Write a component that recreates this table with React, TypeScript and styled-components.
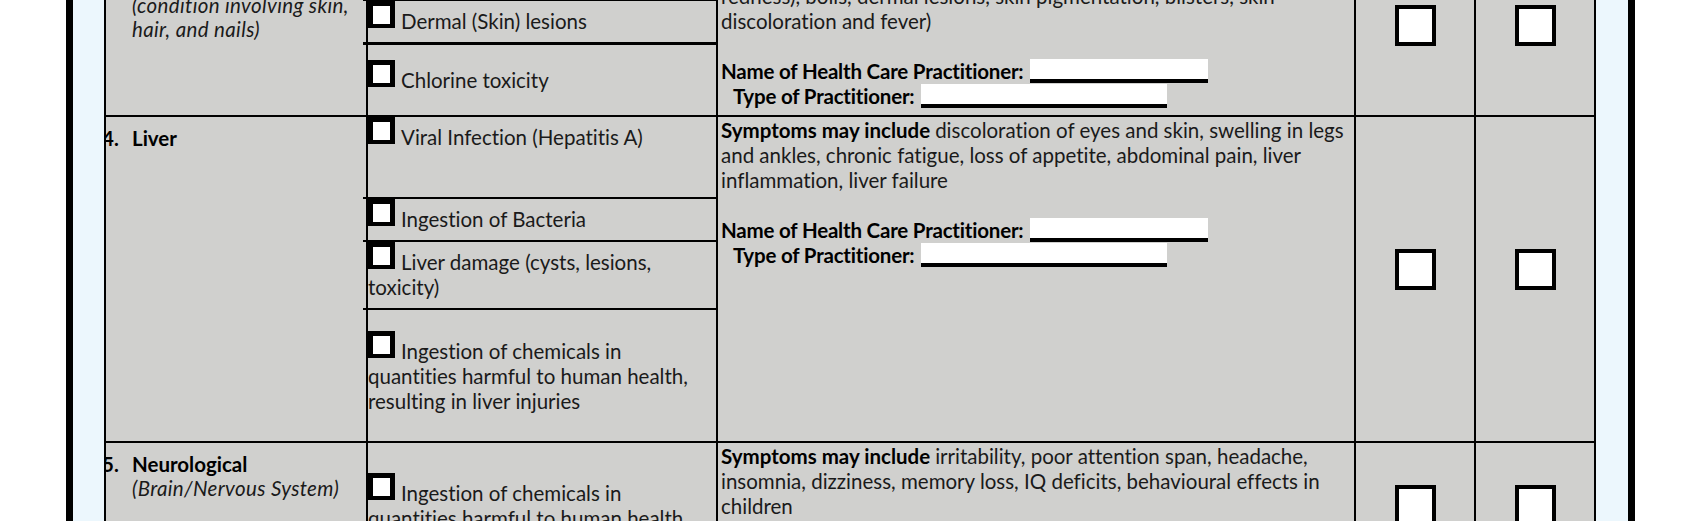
import React from "react";
import styled, { createGlobalStyle } from "styled-components";

const GRAY = "#d0d0ce";
const SKY = "#ecf7fd";
const FONT = `Lato, "Liberation Sans", sans-serif`;

const GlobalStyle = createGlobalStyle`
  html, body {
    margin: 0;
    padding: 0;
    background: #fff;
    overflow: hidden;
  }
  body {
    font-family: ${FONT};
    font-variant-ligatures: none;
    color: #1a1a1a;
  }
`;

interface Cause {
  lines: string[];
  h: number;
  rule?: number;
  pad?: number;
}

interface Entry {
  num: string;
  title: string;
  note: string[];
  labelPad: number;
  causes: Cause[];
  symptoms: string[];
  symptomPad: number;
  boxTop: number;
}

const entries: Entry[] = [
  {
    num: "3.",
    title: "Dermatological",
    note: ["(condition involving skin,", "hair, and nails)"],
    labelPad: 13,
    causes: [
      { lines: ["Skin irritation (rashes)"], h: 43 },
      { lines: ["Dermal (Skin) lesions"], h: 43, rule: 2 },
      { lines: ["Chlorine toxicity"], h: 73, rule: 3, pad: 15 },
    ],
    symptoms: [
      "rashes (itching, burning,",
      "redness), boils, dermal lesions, skin pigmentation, blisters, skin",
      "discoloration and fever)",
    ],
    symptomPad: 3,
    boxTop: 49,
  },
  {
    num: "4.",
    title: "Liver",
    note: [],
    labelPad: 9,
    causes: [
      { lines: ["Viral Infection (Hepatitis A)"], h: 80 },
      { lines: ["Ingestion of Bacteria"], h: 43, rule: 2 },
      { lines: ["Liver damage (cysts, lesions,", "toxicity)"], h: 68, rule: 2 },
      {
        lines: [
          "Ingestion of chemicals in",
          "quantities harmful to human health,",
          "resulting in liver injuries",
        ],
        h: 133,
        rule: 2,
        pad: 21,
      },
    ],
    symptoms: [
      "discoloration of eyes and skin, swelling in legs",
      "and ankles, chronic fatigue, loss of appetite, abdominal pain, liver",
      "inflammation, liver failure",
    ],
    symptomPad: 1,
    boxTop: 132,
  },
  {
    num: "5.",
    title: "Neurological",
    note: ["(Brain/Nervous System)"],
    labelPad: 9,
    causes: [
      {
        lines: [
          "Ingestion of chemicals in",
          "quantities harmful to human health,",
          "resulting in neurological damage",
        ],
        h: 150,
        pad: 30,
      },
    ],
    symptoms: [
      "irritability, poor attention span, headache,",
      "insomnia, dizziness, memory loss, IQ deficits, behavioural effects in",
      "children",
    ],
    symptomPad: 1,
    boxTop: 42,
  },
];

function App() {
  return (
    <>
      <GlobalStyle />
      <Page>
        <Frame>
          <Table>
            {entries.map((e) => (
              <React.Fragment key={e.num}>
                <LabelCell $pad={e.labelPad}>
                  <Title>
                    <Num>{e.num}</Num>
                    {e.title}
                  </Title>
                  {e.note.map((n) => (
                    <Note key={n}>{n}</Note>
                  ))}
                </LabelCell>

                <CauseCell>
                  {e.causes.map((c) => (
                    <SubCell key={c.lines[0]} $h={c.h} $rule={c.rule ?? 0} $pad={c.pad ?? 0}>
                      <TickBox />
                      {c.lines.map((l, i) => (
                        <React.Fragment key={l}>
                          {i > 0 && <br />}
                          {l}
                        </React.Fragment>
                      ))}
                    </SubCell>
                  ))}
                </CauseCell>

                <SymptomCell $pad={e.symptomPad}>
                  {e.symptoms.map((l, i) => (
                    <Line key={l}>
                      {i === 0 && <Strong>Symptoms may include </Strong>}
                      {l}
                    </Line>
                  ))}
                  <Line>&nbsp;</Line>
                  <Line>
                    <FieldLabel>Name of Health Care Practitioner:</FieldLabel>
                    <Field $w={178} />
                  </Line>
                  <Line $indent={12}>
                    <FieldLabel>Type of Practitioner:</FieldLabel>
                    <Field $w={246} />
                  </Line>
                </SymptomCell>

                <CheckCell $top={e.boxTop}>
                  <BigBox />
                </CheckCell>
                <CheckCell $top={e.boxTop}>
                  <BigBox />
                </CheckCell>
              </React.Fragment>
            ))}
          </Table>
        </Frame>
      </Page>
    </>
  );
}

const Page = styled.div`
  padding-left: 66px;
  width: 1569px;
`;

const Frame = styled.div`
  margin-top: -44px;
  border-left: 7px solid #000;
  border-right: 7px solid #000;
  background: ${SKY};
  padding: 0 32px 0 31px;
`;

const Table = styled.div`
  display: grid;
  grid-template-columns: 260px 348px 636px 118px 118px;
  gap: 2px;
  padding: 0 2px;
  background: #000;
  font-size: 20.5px;
`;

const Cell = styled.div`
  background: ${GRAY};
  min-width: 0;
`;

const LabelCell = styled(Cell)<{ $pad: number }>`
  padding-top: ${({ $pad }) => $pad}px;
  line-height: 24px;
  overflow: hidden;
`;

const Title = styled.div`
  font-weight: 700;
  color: #000;
  white-space: nowrap;
`;

const Num = styled.span`
  display: inline-block;
  width: 30px;
  margin-left: -4px;
`;

const Note = styled.div`
  font-style: italic;
  letter-spacing: 0.35px;
  padding-left: 26px;
  white-space: nowrap;
`;

const CauseCell = styled(Cell)`
  display: flex;
  flex-direction: column;
`;

const SubCell = styled.div<{ $h: number; $rule: number; $pad: number }>`
  position: relative;
  box-sizing: border-box;
  height: ${({ $h }) => $h}px;
  border-top: ${({ $rule }) => $rule}px solid #000;
  padding: ${({ $pad }) => $pad}px 6px 0 0;
  line-height: 25px;
  white-space: nowrap;

  &::before {
    content: "";
    display: ${({ $rule }) => ($rule ? "block" : "none")};
    position: absolute;
    left: -5px;
    top: -${({ $rule }) => $rule}px;
    width: 5px;
    height: ${({ $rule }) => $rule}px;
    background: #000;
  }
`;

const TickBox = styled.span`
  display: inline-block;
  box-sizing: border-box;
  width: 27px;
  height: 27px;
  border: 5px solid #000;
  border-bottom-width: 4px;
  background: #fff;
  margin-right: 6px;
  vertical-align: 1px;
`;

const SymptomCell = styled(Cell)<{ $pad: number }>`
  padding: ${({ $pad }) => $pad}px 4px 0 3px;
  line-height: 25px;
`;

const Line = styled.div<{ $indent?: number }>`
  white-space: nowrap;
  padding-left: ${({ $indent }) => $indent ?? 0}px;
`;

const Strong = styled.b`
  font-weight: 700;
  color: #000;
`;

const FieldLabel = styled(Strong)`
  letter-spacing: -0.2px;
`;

const Field = styled.span<{ $w: number }>`
  display: inline-block;
  box-sizing: border-box;
  width: ${({ $w }) => $w}px;
  height: 24px;
  margin-left: 7px;
  background: #fff;
  border-bottom: 4px solid #000;
  vertical-align: -4px;
`;

const CheckCell = styled(Cell)<{ $top: number }>`
  display: flex;
  justify-content: center;
  align-items: flex-start;
  padding-top: ${({ $top }) => $top}px;
`;

const BigBox = styled.span`
  display: block;
  box-sizing: border-box;
  width: 41px;
  height: 41px;
  border: 4px solid #000;
  background: #fff;
`;

export default App;
